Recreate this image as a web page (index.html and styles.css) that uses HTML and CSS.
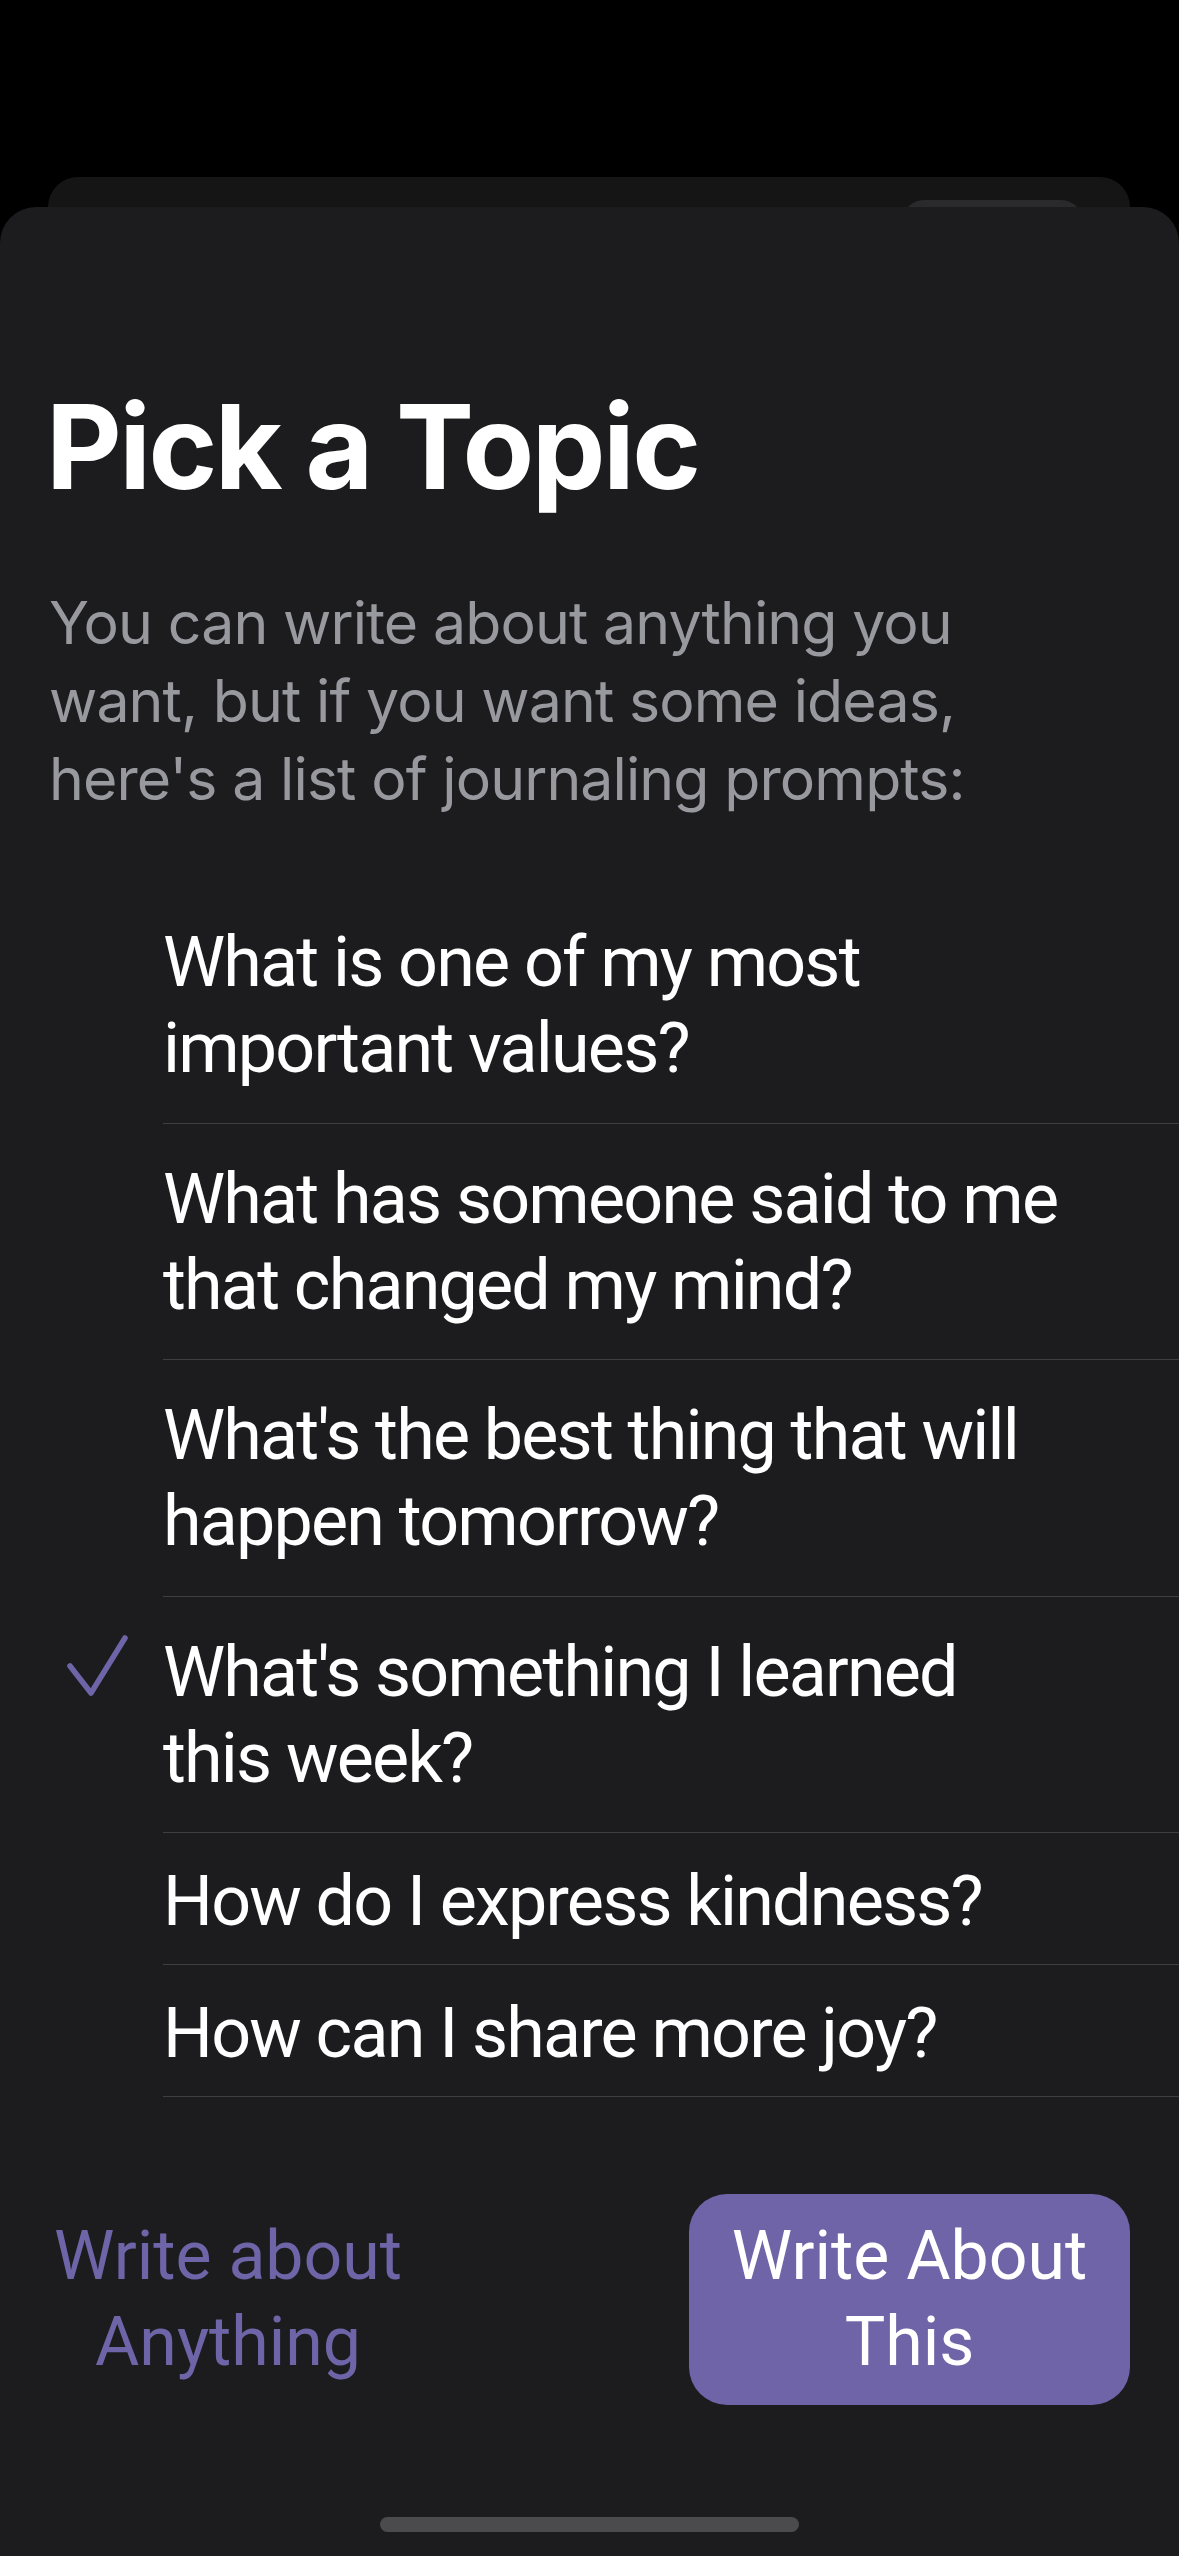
FILE: index.html
```html
<!DOCTYPE html>
<html lang="en">
<head>
<meta charset="utf-8">
<title>Pick a Topic</title>
<link rel="stylesheet" href="styles.css">
</head>
<body>
<div class="screen">
  <div class="backcard"><div class="backpill"></div></div>
  <main class="sheet">
    <h1 class="title">Pick a Topic</h1>
    <p class="subtitle">You can write about anything you want, but if you want some ideas, here's a list of journaling prompts:</p>
    <ul class="list">
      <li class="row"><span class="mark"></span><span class="label">What is one of my most important values?</span></li>
      <li class="row"><span class="mark"></span><span class="label">What has someone said to me that changed my mind?</span></li>
      <li class="row"><span class="mark"></span><span class="label">What's the best thing that will happen tomorrow?</span></li>
      <li class="row selected"><span class="mark"><svg class="check" width="64" height="64" viewBox="0 0 64 64"><path d="M4 33 L25 60 L59 5" fill="none" stroke="#6e64a8" stroke-width="5.5" stroke-linecap="round" stroke-linejoin="round"/></svg></span><span class="label">What's something I learned this week?</span></li>
      <li class="row single"><span class="mark"></span><span class="label">How do I express kindness?</span></li>
      <li class="row single"><span class="mark"></span><span class="label">How can I share more joy?</span></li>
    </ul>
    <div class="footer">
      <button class="btn btn-plain">Write about<br>Anything</button>
      <button class="btn btn-filled">Write About<br>This</button>
    </div>
    <div class="home"></div>
  </main>
</div>
</body>
</html>
```
FILE: styles.css
```css
* { box-sizing: border-box; }
html, body { margin: 0; padding: 0; background: #000; }
body { font-family: Inter, "Noto Sans", "Liberation Sans", sans-serif; color: #fff; }

.screen {
  width: 1179px;
  min-height: 2556px;
  display: flex;
  flex-direction: column;
  padding-top: 177px;
  overflow: hidden;
}

.backcard {
  height: 30px;
  margin: 0 49px 0 48px;
  background: #151515;
  border-radius: 30px 30px 0 0;
  overflow: hidden;
  display: flex;
  justify-content: flex-end;
  padding-right: 47px;
}
.backpill {
  width: 181px;
  height: 44px;
  margin-top: 23px;
  background: #2a2a2c;
  border-radius: 22px;
}

.sheet {
  flex: 1;
  background: #1c1c1e;
  border-radius: 36px 36px 0 0;
  padding-top: 170px;
  display: flex;
  flex-direction: column;
}

.title {
  margin: 0;
  padding-left: 46px;
  font-size: 117px;
  line-height: 140px;
  font-weight: 700;
  letter-spacing: -2.5px;
}

.subtitle {
  margin: 67px 0 0;
  padding: 0 120px 0 49px;
  font-size: 59px;
  line-height: 78px;
  color: #98989f;
  font-weight: 400;
  letter-spacing: -0.9px;
}

.list {
  list-style: none;
  margin: 69px 0 0;
  padding: 0;
}
.row { display: flex; }
.mark { width: 163px; flex: none; }
.check { display: block; margin: 36px 0 0 66px; }
.label {
  flex: 1;
  font-family: Roboto, Inter, "Liberation Sans", sans-serif;
  font-size: 70px;
  line-height: 86px;
  letter-spacing: -1.8px;
  padding: 32px 100px 31.5px 0;
  border-bottom: 1px solid #3f3f43;
}
.row.single .label { padding-top: 25px; padding-bottom: 20px; }

.footer {
  margin-top: 97px;
  display: flex;
  justify-content: space-between;
  align-items: center;
  padding: 0 49px 0 54px;
}
.btn {
  font-family: Roboto, Inter, "Liberation Sans", sans-serif;
  font-size: 68px;
  line-height: 86px;
  letter-spacing: 0;
  border: 0;
  text-align: center;
  padding: 19px 0 20px;
  background: transparent;
}
.btn-plain { color: #6e64a8; }
.btn-filled {
  width: 441px;
  background: #6e64a7;
  color: #fff;
  border-radius: 38px;
}

.home {
  margin: 112px auto 24px;
  width: 419px;
  height: 15px;
  border-radius: 8px;
  background: #4b4b4d;
}
```
